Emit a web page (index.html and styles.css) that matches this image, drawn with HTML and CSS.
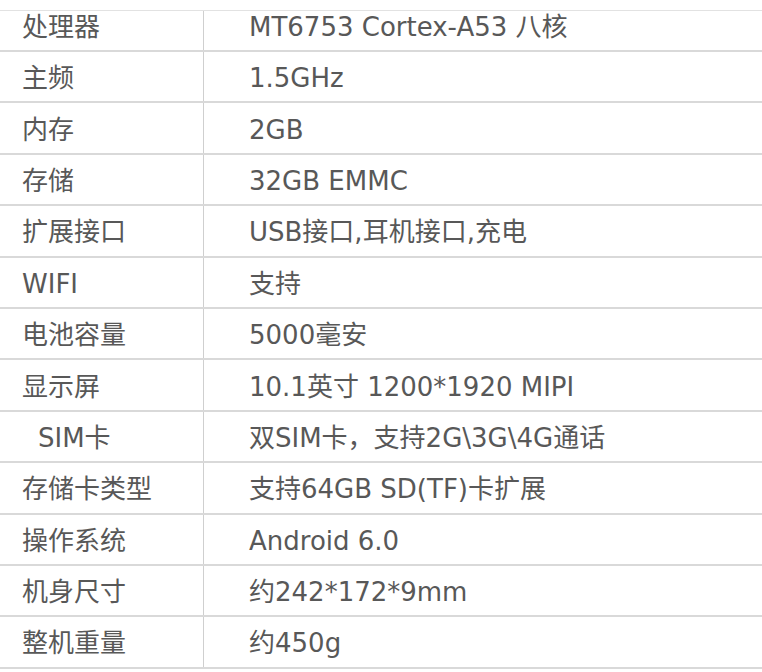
FILE: index.html
```html
<!DOCTYPE html>
<html lang="zh-CN">
<head>
<meta charset="utf-8">
<link rel="stylesheet" href="styles.css">
</head>
<body>
<div class="spec">
  <div class="row first"><div class="k">处理器</div><div class="v">MT6753 Cortex-A53 八核</div></div>
  <div class="row"><div class="k">主频</div><div class="v">1.5GHz</div></div>
  <div class="row"><div class="k">内存</div><div class="v">2GB</div></div>
  <div class="row"><div class="k">存储</div><div class="v">32GB EMMC</div></div>
  <div class="row"><div class="k">扩展接口</div><div class="v">USB接口,耳机接口,充电</div></div>
  <div class="row"><div class="k">WIFI</div><div class="v">支持</div></div>
  <div class="row"><div class="k">电池容量</div><div class="v">5000毫安</div></div>
  <div class="row"><div class="k">显示屏</div><div class="v">10.1英寸 1200*1920 MIPI</div></div>
  <div class="row"><div class="k indent">SIM卡</div><div class="v">双SIM卡，支持2G\3G\4G通话</div></div>
  <div class="row"><div class="k">存储卡类型</div><div class="v">支持64GB SD(TF)卡扩展</div></div>
  <div class="row"><div class="k">操作系统</div><div class="v">Android 6.0</div></div>
  <div class="row"><div class="k">机身尺寸</div><div class="v">约242*172*9mm</div></div>
  <div class="row"><div class="k">整机重量</div><div class="v">约450g</div></div>
</div>
</body>
</html>
```

FILE: styles.css
```css
html, body {
  margin: 0;
  padding: 0;
  background: #ffffff;
}
body {
  font-family: "DejaVu Sans", "Noto Sans CJK SC", sans-serif;
  color: #585858;
  font-size: 26px;
  line-height: 30px;
}
.spec {
  margin-top: 10px;
  border-top: 1px solid #e2e2e2;
  display: flex;
  flex-direction: column;
}
.row {
  display: grid;
  grid-template-columns: 204px 1fr;
  height: 49.4px;
  border-bottom: 2px solid #d9d9d9;
}
.row.first {
  height: 39px;
}
.k, .v {
  display: flex;
  align-items: center;
  padding-top: 3px;
}
.k {
  border-right: 1px solid #cfcfcf;
  padding-left: 22px;
}
.row.first .k, .row.first .v {
  align-items: flex-start;
  padding-top: 1px;
}
.k.indent {
  padding-left: 38px;
}
.v {
  padding-left: 45px;
}
```
